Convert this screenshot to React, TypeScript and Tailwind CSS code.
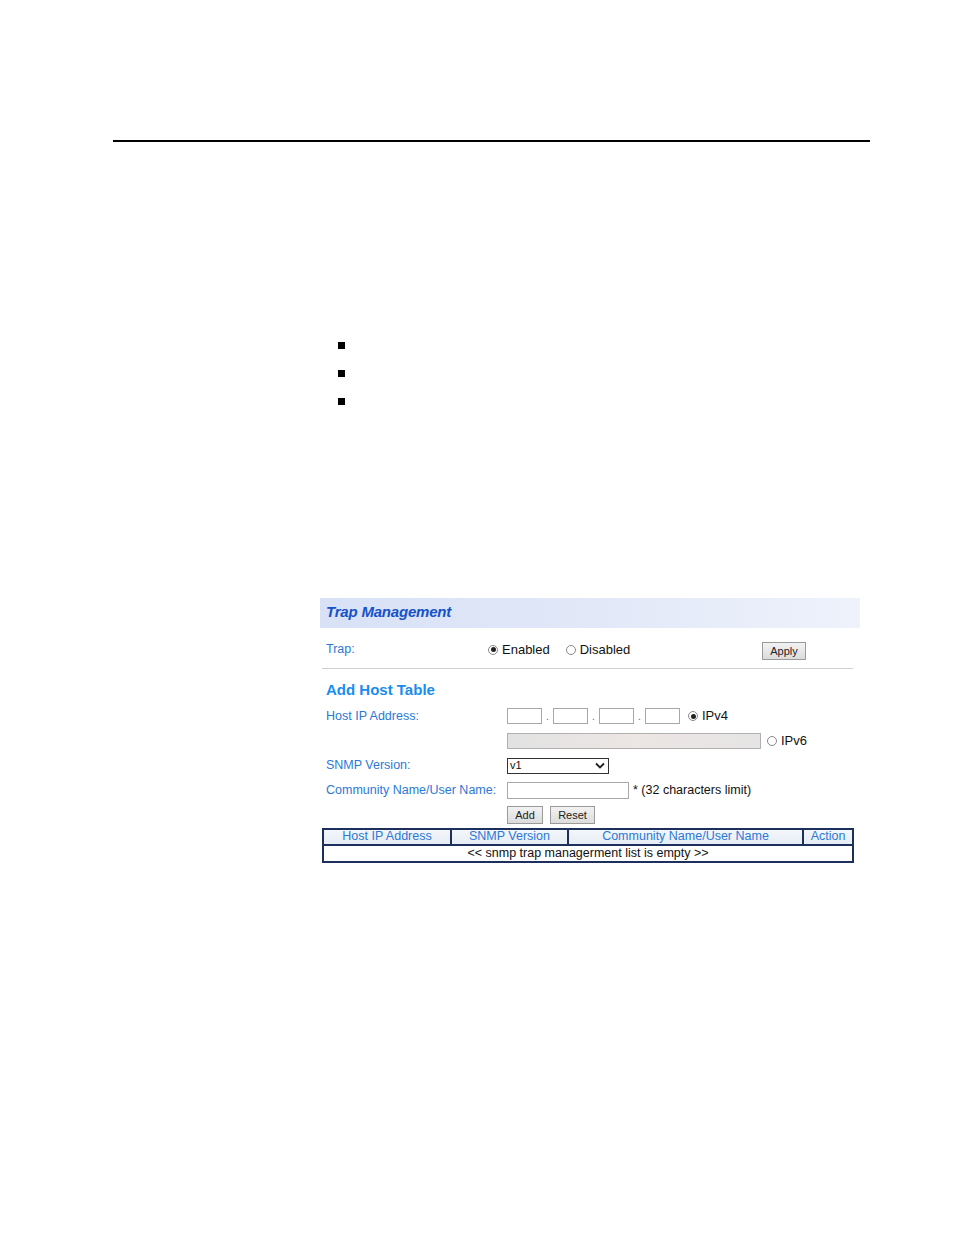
import React from "react";

const Radio = ({ checked }: { checked?: boolean }) => (
  <span className="inline-flex items-center justify-center w-[10px] h-[10px] rounded-full border border-[#8a8a8a] bg-white">
    {checked && <span className="w-[5px] h-[5px] rounded-full bg-[#222]" />}
  </span>
);

const Btn = ({ label, w }: { label: string; w: string }) => (
  <button
    className={`${w} h-[18px] border border-[#9a9a9a] bg-gradient-to-b from-[#f2f2f2] to-[#dcdcdc] text-[11px] text-[#222] leading-none`}
  >
    {label}
  </button>
);

const Octet = () => <span className="w-[35px] h-[16px] border border-[#a8a8a8] bg-white" />;

const Label = ({ children }: { children: React.ReactNode }) => (
  <span className="w-[181px] shrink-0 text-[12.5px] text-[#2b79d6]">{children}</span>
);

export default function App() {
  return (
    <div className="w-[954px] h-[1235px] bg-white font-['Liberation_Sans',Arial,sans-serif] overflow-hidden">
      <div className="pt-[140px] pl-[113px] pr-[84px]">
        <div className="h-[1.5px] bg-black" />
      </div>

      <ul className="mt-[200px] ml-[338px] flex flex-col gap-[21px]">
        <li className="w-[7px] h-[7px] bg-black" />
        <li className="w-[7px] h-[7px] bg-black" />
        <li className="w-[7px] h-[7px] bg-black" />
      </ul>

      <div className="mt-[193px] ml-[320px] w-[540px]">
        {/* title bar */}
        <div className="h-[30px] flex items-center pl-[6px] bg-gradient-to-r from-[#d8e1f6] via-[#e2e8f8] to-[#eef2fb]">
          <span className="text-[15px] font-bold italic text-[#1652c8] tracking-[-0.2px]">Trap Management</span>
        </div>

        {/* trap row */}
        <div className="mt-[11px] h-[22px] flex items-center pl-[6px] pr-[54px]">
          <span className="w-[162px] text-[12.5px] text-[#2b79d6]">Trap:</span>
          <span className="flex items-center gap-[4px] text-[13px] text-[#111]">
            <Radio checked />
            Enabled
          </span>
          <span className="ml-[16px] flex items-center gap-[4px] text-[13px] text-[#111]">
            <Radio />
            Disabled
          </span>
          <span className="ml-auto">
            <Btn label="Apply" w="w-[44px]" />
          </span>
        </div>

        <div className="mt-[7px] ml-[2px] w-[531px] h-px bg-[#cfcfcf]" />

        {/* add host table */}
        <div className="pl-[6px]">
          <div className="h-[24px] mt-[10px] flex items-center text-[15px] font-bold text-[#1a8cf0]">Add Host Table</div>

          <div className="h-[25px] mt-[1px] flex items-center">
            <Label>Host IP Address:</Label>
            <div className="flex items-center">
              <Octet />
              <span className="w-[11px] text-center text-[10px] text-[#666]">.</span>
              <Octet />
              <span className="w-[11px] text-center text-[10px] text-[#666]">.</span>
              <Octet />
              <span className="w-[11px] text-center text-[10px] text-[#666]">.</span>
              <Octet />
              <span className="ml-[8px] flex items-center gap-[4px] text-[13px] text-[#111]">
                <Radio checked />
                IPv4
              </span>
            </div>
          </div>

          <div className="h-[25px] flex items-center">
            <span className="w-[181px] shrink-0" />
            <span className="w-[254px] h-[16px] border border-[#b0b0b0] bg-gradient-to-r from-[#e2e2e2] via-[#ece6e4] to-[#e6e4e4]" />
            <span className="ml-[6px] flex items-center gap-[4px] text-[13px] text-[#111]">
              <Radio />
              IPv6
            </span>
          </div>

          <div className="h-[24px] flex items-center">
            <Label>SNMP Version:</Label>
            <span className="w-[102px] h-[16px] border border-[#333] bg-white flex items-center justify-between pl-[2px] pr-[3px]">
              <span className="text-[11px] text-[#111] leading-none">v1</span>
              <svg width="10" height="7" viewBox="0 0 10 7">
                <path d="M1 1.5 L5 5.5 L9 1.5" fill="none" stroke="#222" strokeWidth="1.8" />
              </svg>
            </span>
          </div>

          <div className="h-[25px] flex items-center">
            <Label>Community Name/User Name:</Label>
            <span className="w-[122px] h-[17px] border border-[#a8a8a8] bg-white" />
            <span className="ml-[4px] text-[12.5px] text-[#111]">* (32 characters limit)</span>
          </div>

          <div className="h-[25px] flex items-center gap-[7px] pl-[181px]">
            <Btn label="Add" w="w-[36px]" />
            <Btn label="Reset" w="w-[45px]" />
          </div>
        </div>

        {/* list table */}
        <table className="ml-[2px] w-[532px] border-collapse border-2 border-[#1d2f5c] text-[12.5px] leading-none">
          <thead>
            <tr className="h-[16px] bg-gradient-to-b from-[#f4f7fb] to-[#e6ecf5] text-[#2b79d6]">
              <th className="w-[128px] border-2 border-[#1d2f5c] font-normal">Host IP Address</th>
              <th className="w-[117px] border-2 border-[#1d2f5c] font-normal">SNMP Version</th>
              <th className="w-[235px] border-2 border-[#1d2f5c] font-normal">Community Name/User Name</th>
              <th className="border-2 border-[#1d2f5c] font-normal">Action</th>
            </tr>
          </thead>
          <tbody>
            <tr className="h-[17px]">
              <td colSpan={4} className="text-center text-[#111] pt-[1px]">
                &lt;&lt; snmp trap managerment list is empty &gt;&gt;
              </td>
            </tr>
          </tbody>
        </table>
      </div>
    </div>
  );
}
